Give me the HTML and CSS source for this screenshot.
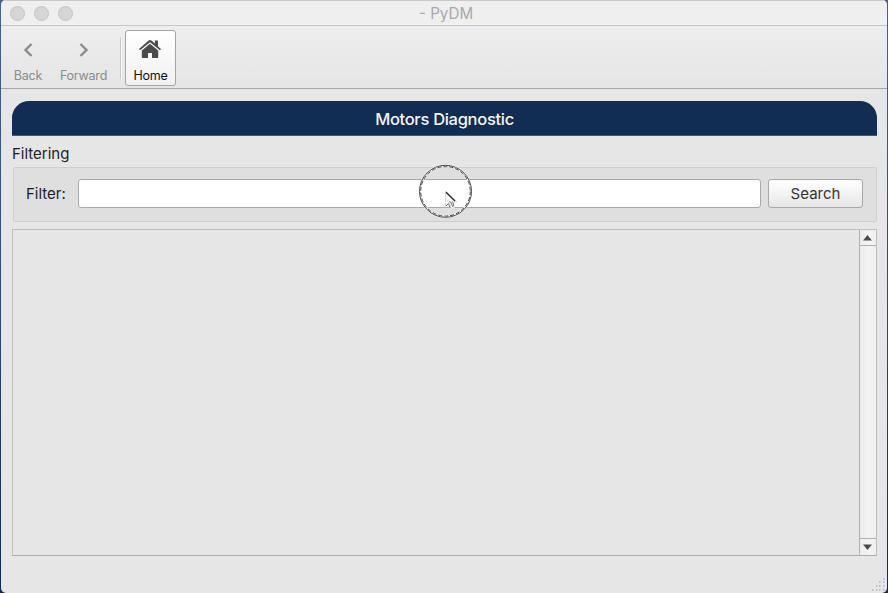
FILE: index.html
```html
<!DOCTYPE html>
<html lang="en">
<head>
<meta charset="utf-8">
<title>- PyDM</title>
<link rel="stylesheet" href="styles.css">
</head>
<body>
<div class="window">
  <header class="titlebar">
    <div class="lights"><i></i><i></i><i></i></div>
    <span class="title">- PyDM</span>
  </header>
  <nav class="toolbar">
    <div class="tool back">
      <svg width="12" height="16" viewBox="0 0 12 16"><path d="M9.500 2 3.500 8l6 6" fill="none" stroke="#888c8f" stroke-width="2.400"/></svg>
      <span>Back</span>
    </div>
    <div class="tool forward">
      <svg width="12" height="16" viewBox="0 0 12 16"><path d="M2.500 2l6 6-6 6" fill="none" stroke="#888c8f" stroke-width="2.400"/></svg>
      <span>Forward</span>
    </div>
    <div class="separator"></div>
    <div class="tool home">
      <svg width="24" height="20" viewBox="0 0 24 20"><path d="M12 4.700 3.800 11.500V18c0 .6.3 1 1 1H10v-5h4v5h5.200c.7 0 1-.4 1-1v-6.500zM23 10l-3-2.600V1.500h-3.200v3L13.400 1.500c-.8-.7-2-.7-2.800 0L1 10l1 1.300L12 3.200l10 8.100z" fill="#4b4b4a"/></svg>
      <span>Home</span>
    </div>
  </nav>
  <main class="content">
    <h1 class="banner"><span>Motors Diagnostic</span></h1>
    <div class="group-title"><span>Filtering</span></div>
    <section class="filter-box">
      <label for="filter">Filter:</label>
      <input id="filter" type="text">
      <button type="button"><span>Search</span></button>
    </section>
    <section class="results">
      <div class="list"></div>
      <div class="scrollbar">
        <div class="arrow up"><svg width="9" height="6" viewBox="0 0 9 6"><path d="M4.500 0 9 5.500H0z" fill="#4c4c4c"/></svg></div>
        <div class="arrow down"><svg width="9" height="6" viewBox="0 0 9 6"><path d="M0 .5h9L4.500 6z" fill="#4c4c4c"/></svg></div>
      </div>
    </section>
  </main>
  <svg class="grip" width="14" height="14" viewBox="0 0 14 14"><path d="M11 1h2M7 4h2M11 4h2M4 8h2M7 8h2M11 8h2M0 12h2M4 12h2M7 12h2M11 12h2" stroke="#b5b5b5" stroke-width="1.500" stroke-dasharray="1.500 1"/></svg>
  <svg class="pointer" width="54" height="54" viewBox="0 0 54 54">
    <circle cx="26.500" cy="27.300" r="25.500" fill="none" stroke="#fff" stroke-width="2.400"/>
    <circle cx="26.500" cy="27.300" r="26" fill="none" stroke="#333" stroke-width=".9"/>
    <circle cx="26.500" cy="27.300" r="24.800" fill="none" stroke="#333" stroke-width=".9" stroke-dasharray="4 2"/>
    <path d="M26.500 27v15l3.500-3 2.500 6 3-1.300-2.500-5.700h5z" fill="#f5f5f5" stroke="#ddd"/>
    <path d="M27 28.300l9 8.700" stroke="#222" stroke-width="1.200"/>
    <path d="M27 42l2.500-2.500 1.500 4M30 37.500l2 1 1.500 4 1.500-1-1.500-4" fill="none" stroke="#777" stroke-width="1"/>
  </svg>
</div>
</body>
</html>
```

FILE: styles.css
```css
* { box-sizing: border-box; }

body {
  margin: 0;
  height: 593px;
  overflow: hidden;
  background: linear-gradient(#46618e, #254579 60%, #0b2a5c);
  font-family: Inter, "Liberation Sans", sans-serif;
  color: #1d1d1f;
}

svg { display: block; }

.window {
  position: relative;
  display: flex;
  flex-direction: column;
  width: 886px;
  height: 593px;
  margin-left: 1px;
  border-radius: 5px;
  background: #e6e6e6;
  overflow: hidden;
}

.titlebar {
  display: grid;
  grid-template-columns: 1fr auto 1fr;
  align-items: center;
  height: 26px;
  border-top: 1px solid #c9c9c9;
  border-bottom: 1px solid #c6c6c6;
  background: #efefef;
}

.lights { display: flex; gap: 9px; padding-left: 9px; }

.lights i {
  width: 15px;
  height: 15px;
  border: 1px solid #c4c4c4;
  border-radius: 50%;
  background: #d5d5d5;
}

.title {
  padding: 2px 0 0 4px;
  font-size: 15.2px;
  line-height: 20px;
  color: #a9a9a9;
}

.toolbar {
  display: flex;
  align-items: flex-start;
  height: 63px;
  padding-top: 4px;
  border-bottom: 1px solid #a8a8a8;
  background: linear-gradient(#eeeeee, #e5e5e5);
}

.tool {
  display: flex;
  flex-direction: column;
  align-items: center;
  height: 56px;
  padding-top: 12px;
  font-size: 12.5px;
  letter-spacing: -0.2px;
  line-height: 16px;
  color: #898c8e;
}

.tool span { margin-top: 10px; white-space: nowrap; }
.back { width: 54px; }
.forward { width: 57px; }
.separator { width: 2px; height: 42px; margin: 7px 4px 0 8px; border-left: 1px solid #c8c8c8; border-right: 1px solid #f7f7f7; }

.home {
  width: 51px;
  margin-left: -1px;
  padding-top: 8px;
  border: 1px solid #a5a5a5;
  border-radius: 3px;
  background: linear-gradient(#fff, #f1f1f1);
  color: #111;
}

.home svg { margin-right: 2px; }
.home span { margin-top: 9px; }

.content {
  display: flex;
  flex-direction: column;
  padding: 12px 10px 0 11px;
}

.banner {
  height: 35px;
  margin: 0;
  border-bottom: 1px solid #40587a;
  border-radius: 17px 17px 0 0;
  background: #122d54;
  color: #f5f5f5;
  font-size: 16.5px;
  font-weight: 500;
  letter-spacing: -0.3px;
  line-height: 36px;
  text-align: center;
}

.group-title { height: 31px; padding-top: 8px; font-size: 15px; line-height: 20px; }

.filter-box {
  display: flex;
  align-items: center;
  height: 55px;
  margin-left: 1px;
  padding: 0 13px 2px 12px;
  border: 1px solid #cecece;
  border-radius: 2px;
  background: #dfdfdf;
}

.filter-box label { width: 52px; font-size: 15px; }

.filter-box input {
  flex: 1;
  min-width: 0;
  height: 29px;
  padding: 0 6px;
  border: 1px solid #a9a9a9;
  border-radius: 3px;
  background: #fff;
  font: inherit;
}

.filter-box button {
  width: 95px;
  height: 29px;
  margin-left: 7px;
  padding: 0;
  border: 1px solid #a9a9a9;
  border-radius: 3px;
  background: linear-gradient(#fff, #e6e6e6);
  color: #333;
  font-family: inherit;
  font-size: 15px;
}

.results {
  display: flex;
  height: 327px;
  margin-top: 7px;
  border: 1px solid #c0c0c0;
  border-bottom-color: #acacac;
}

.list { flex: 1; }

.scrollbar {
  display: flex;
  flex-direction: column;
  justify-content: space-between;
  width: 17px;
  border-left: 1px solid #b0b0b0;
  background: linear-gradient(90deg, #ececec, #f4f4f4 60%, #ededed);
}

.arrow { display: grid; place-items: center; height: 17px; padding-right: 1px; }
.up { height: 16px; padding-top: 1px; border-bottom: 1px solid #b0b0b0; }
.down { border-top: 1px solid #b0b0b0; }

.grip { position: absolute; right: 1px; bottom: 1px; }
.pointer { position: absolute; left: 418px; top: 164px; }
```
